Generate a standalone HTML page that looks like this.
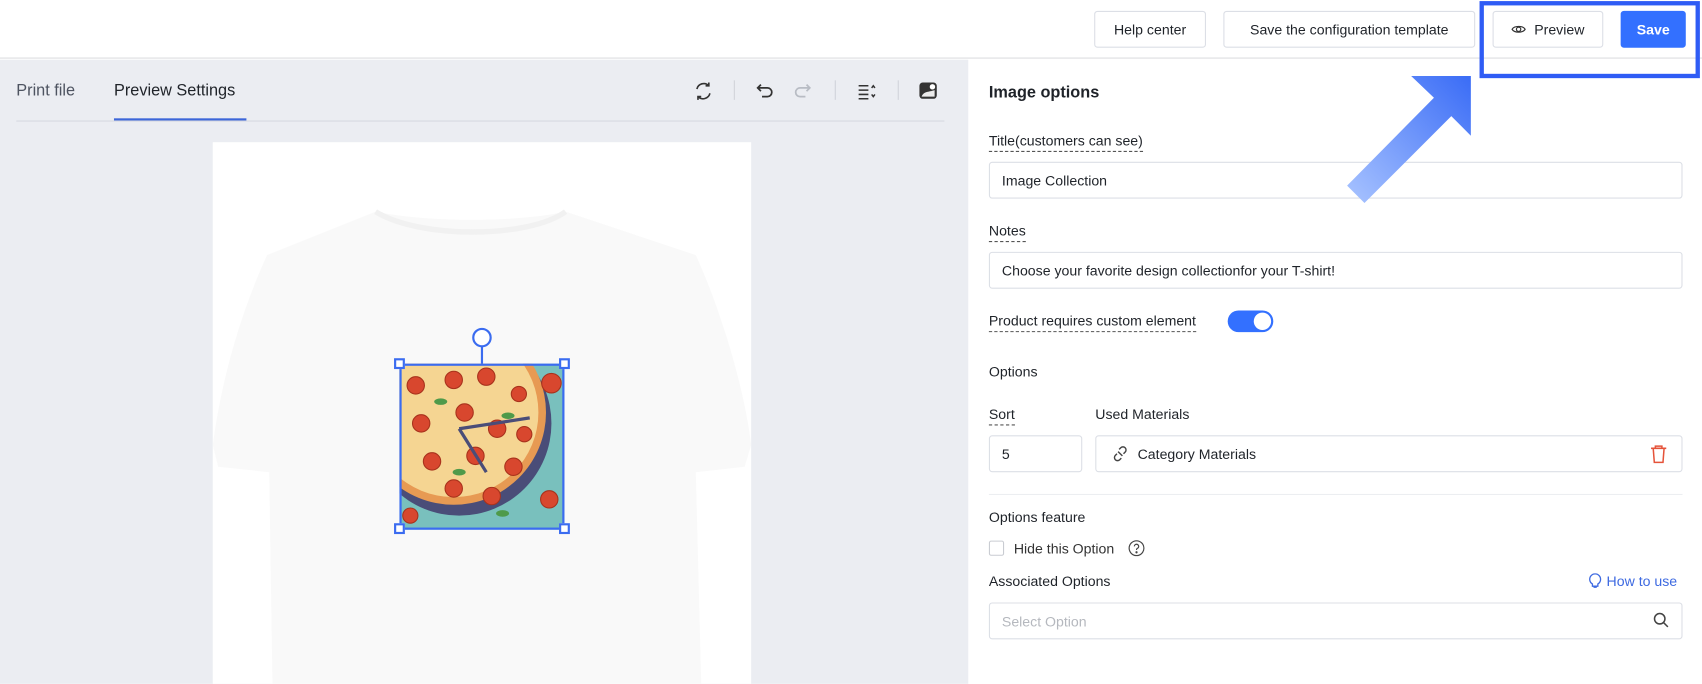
<!DOCTYPE html>
<html><head><meta charset="utf-8"><style>
*{box-sizing:border-box;margin:0;padding:0}
html,body{width:1702px;height:684px;overflow:hidden;background:#fff;font-family:"Liberation Sans",sans-serif;color:#1f2329}
#w{position:absolute;left:0;top:0;width:1568px;height:630px;transform:scale(1.0855);transform-origin:0 0}
.a{position:absolute}
.btn{position:absolute;height:34px;border:1px solid #dcdfe6;border-radius:3px;background:#fff;font-size:13px;display:flex;align-items:center;justify-content:center;color:#1f2329}
.lbl{position:absolute;font-size:13px;color:#1f2329}
.dash{border-bottom:1px dashed #555;padding-bottom:2px}
.inp{position:absolute;height:34px;border:1px solid #dcdfe6;border-radius:3px;background:#fff;font-size:13px;display:flex;align-items:center;padding-left:11px;color:#1f2329}
</style></head><body><div id="w">
<div class="a" style="left:0;top:0;width:1568px;height:54px;background:#fff;border-bottom:1px solid #dcdde0"></div>
<div class="btn" style="left:1008px;top:10px;width:103px">Help center</div>
<div class="btn" style="left:1127px;top:10px;width:232px">Save the configuration template</div>
<div class="a" style="left:1363px;top:1px;width:203px;height:71px;border:4px solid #2f5cf5"></div>
<div class="btn" style="left:1375px;top:10px;width:102px"><svg width="14" height="14" viewBox="0 0 14 14" style="margin-right:7px"><path d="M1 7C3 3.5 11 3.5 13 7C11 10.5 3 10.5 1 7Z" fill="none" stroke="#333" stroke-width="1.1"/><circle cx="7" cy="7" r="2" fill="none" stroke="#333" stroke-width="1.1"/></svg>Preview</div>
<div class="btn" style="left:1493px;top:10px;width:60px;background:#3370ff;border-color:#3370ff;color:#fff;font-weight:bold">Save</div>
<div class="a" style="left:0;top:55px;width:892px;height:575px;background:#ebedf2"></div>
<div class="lbl" style="left:15px;top:75px;font-size:15px;color:#4e5461">Print file</div>
<div class="lbl" style="left:105px;top:75px;font-size:15px;color:#1f2329">Preview Settings</div>
<div class="a" style="left:15px;top:111px;width:855px;height:1px;background:#d6d9e0"></div>
<div class="a" style="left:105px;top:109px;width:122px;height:2px;background:#3c66d9"></div>
<svg class="a" style="left:638px;top:74px" width="20" height="20" viewBox="0 0 20 20" fill="none" stroke="#333" stroke-width="1.5"><path d="M4 8A6.5 6.5 0 0 1 15 5M16 12A6.5 6.5 0 0 1 5 15"/><path d="M15 2v3h-3M5 18v-3h3"/></svg>
<div class="a" style="left:676px;top:74px;width:1px;height:18px;background:#d0d3da"></div>
<svg class="a" style="left:696px;top:75px" width="18" height="18" viewBox="0 0 18 18" fill="none" stroke="#333" stroke-width="1.6"><path d="M5 3L2 6l3 3M2 6h9a4 4 0 0 1 0 8H6"/></svg>
<svg class="a" style="left:730px;top:75px" width="18" height="18" viewBox="0 0 18 18" fill="none" stroke="#b8bcc4" stroke-width="1.6"><path d="M13 3l3 3-3 3M16 6H7a4 4 0 0 0 0 8h5"/></svg>
<div class="a" style="left:769px;top:74px;width:1px;height:18px;background:#d0d3da"></div>
<svg class="a" style="left:789px;top:75px" width="18" height="18" viewBox="0 0 18 18" fill="none" stroke="#333" stroke-width="1.4"><path d="M2 4h9M2 8h9M2 12h9M2 16h9M14 6l1.5-2 1.5 2M14 12l1.5 2 1.5-2"/></svg>
<div class="a" style="left:827px;top:74px;width:1px;height:18px;background:#d0d3da"></div>
<svg class="a" style="left:846px;top:74px" width="19" height="19" viewBox="0 0 19 19"><rect x="1" y="2" width="16" height="15" rx="3" fill="#333"/><path d="M3 15c2-5 6-4 12-6v6z" fill="#fff" opacity=".9"/><circle cx="13" cy="6" r="2.5" fill="#fff"/></svg>
<div class="a" style="left:196px;top:131px;width:496px;height:499px;background:#fff"></div>
<svg class="a" style="left:196px;top:190px" width="496" height="440" viewBox="0 0 496 440"><path d="M150 5C200 15 280 15 325 5L445 45C470 100 490 170 496 220L490 240 445 245 450 440H55L52 245 5 240 0 220C8 160 25 100 50 45Z" fill="#f9f9f9"/><path d="M150 5C190 30 290 30 325 5" fill="none" stroke="#f1f1f1" stroke-width="5"/></svg>
<div class="a" style="left:368px;top:335px;width:152px;height:153px;background:#79c0bd;overflow:hidden">
<div class="a" style="left:-30px;top:-30px;width:170px;height:170px;border-radius:50%;background:#4a4d78"></div>
<div class="a" style="left:-35px;top:-40px;width:170px;height:170px;border-radius:50%;background:#e79a53"></div>
<div class="a" style="left:-28px;top:-33px;width:156px;height:156px;border-radius:50%;background:#f5d592"></div>
<svg class="a" style="left:0;top:0" width="152" height="153"><g fill="#d8472e" stroke="#a8321c" stroke-width="1"><circle cx="15" cy="20" r="8"/><circle cx="50" cy="15" r="8"/><circle cx="80" cy="12" r="8"/><circle cx="110" cy="28" r="7"/><circle cx="20" cy="55" r="8"/><circle cx="60" cy="45" r="8"/><circle cx="90" cy="60" r="8"/><circle cx="115" cy="65" r="7"/><circle cx="30" cy="90" r="8"/><circle cx="70" cy="85" r="8"/><circle cx="105" cy="95" r="8"/><circle cx="50" cy="115" r="8"/><circle cx="85" cy="122" r="8"/><circle cx="138" cy="125" r="8"/><circle cx="140" cy="18" r="9"/><circle cx="10" cy="140" r="7"/></g><g fill="#4f9a4a"><ellipse cx="38" cy="35" rx="6" ry="3"/><ellipse cx="100" cy="48" rx="6" ry="3"/><ellipse cx="55" cy="100" rx="6" ry="3"/><ellipse cx="95" cy="138" rx="6" ry="3"/></g><path d="M55 60L120 50M55 60L80 100" stroke="#4a4d78" stroke-width="3"/></svg>
</div>
<div class="a" style="left:368px;top:335px;width:152px;height:153px;border:2px solid #3b6cf0"></div>
<div class="a" style="left:443px;top:318px;width:2px;height:17px;background:#3b6cf0"></div>
<div class="a" style="left:435px;top:302px;width:18px;height:18px;border-radius:50%;border:2px solid #3b6cf0;background:#fff"></div>
<div class="a" style="left:363px;top:330px;width:10px;height:10px;border:2px solid #3b6cf0;background:#fff"></div>
<div class="a" style="left:515px;top:330px;width:10px;height:10px;border:2px solid #3b6cf0;background:#fff"></div>
<div class="a" style="left:363px;top:482px;width:10px;height:10px;border:2px solid #3b6cf0;background:#fff"></div>
<div class="a" style="left:515px;top:482px;width:10px;height:10px;border:2px solid #3b6cf0;background:#fff"></div>
<div class="lbl" style="left:911px;top:77px;font-size:15px;font-weight:bold">Image options</div>
<div class="lbl dash" style="left:911px;top:122px">Title(customers can see)</div>
<div class="inp" style="left:911px;top:149px;width:639px">Image Collection</div>
<div class="lbl dash" style="left:911px;top:205px">Notes</div>
<div class="inp" style="left:911px;top:232px;width:639px">Choose your favorite design collectionfor your T-shirt!</div>
<div class="lbl dash" style="left:911px;top:288px">Product requires custom element</div>
<div class="a" style="left:1131px;top:286px;width:42px;height:20px;border-radius:10px;background:#3370ff"><div class="a" style="left:24px;top:2px;width:16px;height:16px;border-radius:50%;background:#fff"></div></div>
<div class="lbl" style="left:911px;top:335px">Options</div>
<div class="lbl dash" style="left:911px;top:374px">Sort</div>
<div class="lbl" style="left:1009px;top:374px">Used Materials</div>
<div class="inp" style="left:911px;top:401px;width:86px">5</div>
<div class="inp" style="left:1009px;top:401px;width:541px;padding-left:14px"><svg width="16" height="16" viewBox="0 0 16 16" fill="none" stroke="#444" stroke-width="1.3" style="margin-right:8px"><path d="M7 4l1.5-1.5a2.8 2.8 0 0 1 4 4L11 8M9 12l-1.5 1.5a2.8 2.8 0 0 1-4-4L5 8M6 6l4 4"/></svg>Category Materials</div>
<svg class="a" style="left:1520px;top:409px" width="16" height="18" viewBox="0 0 16 18" fill="none" stroke="#e5533a" stroke-width="1.4"><path d="M1 4h14M5 4V2h6v2M3 4l1 13h8l1-13"/></svg>
<div class="a" style="left:911px;top:455px;width:639px;height:1px;background:#eceef1"></div>
<div class="lbl" style="left:911px;top:469px">Options feature</div>
<div class="a" style="left:911px;top:498px;width:14px;height:14px;border:1px solid #c9ccd2;border-radius:2px"></div>
<div class="lbl" style="left:934px;top:498px;color:#333">Hide this Option</div>
<svg class="a" style="left:1039px;top:497px" width="16" height="16" viewBox="0 0 16 16" fill="none" stroke="#444" stroke-width="1.1"><circle cx="8" cy="8" r="6.8"/><path d="M6 6.3a2 2 0 1 1 2.5 2c-.5.2-.5.6-.5 1.4"/><circle cx="8" cy="11.8" r=".5" fill="#444"/></svg>
<div class="lbl" style="left:911px;top:528px">Associated Options</div>
<div class="lbl" style="left:1463px;top:528px;color:#3e6ae1"><svg width="13" height="14" viewBox="0 0 13 14" fill="none" stroke="#3e6ae1" stroke-width="1.2" style="vertical-align:-2px;margin-right:4px"><path d="M4 10a5 5 0 1 1 5 0v2H4z M5 13h3"/></svg>How to use</div>
<div class="inp" style="left:911px;top:555px;width:639px;color:#b5b8be">Select Option</div>
<svg class="a" style="left:1523px;top:564px" width="15" height="15" viewBox="0 0 15 15" fill="none" stroke="#444" stroke-width="1.4"><circle cx="6" cy="6" r="4.8"/><path d="M9.5 9.5L13.5 13.5"/></svg>
<svg class="a" style="left:1235px;top:65px" width="125" height="125" viewBox="0 0 125 125"><defs><linearGradient id="g" x1="0" y1="1" x2="1" y2="0"><stop offset="0" stop-color="#a9c4ff"/><stop offset="1" stop-color="#3a6cf6"/></linearGradient></defs><polygon points="65,5 120,5 120,60 102,42 22,122 6,106 86,25" fill="url(#g)"/></svg>
</div></body></html>
